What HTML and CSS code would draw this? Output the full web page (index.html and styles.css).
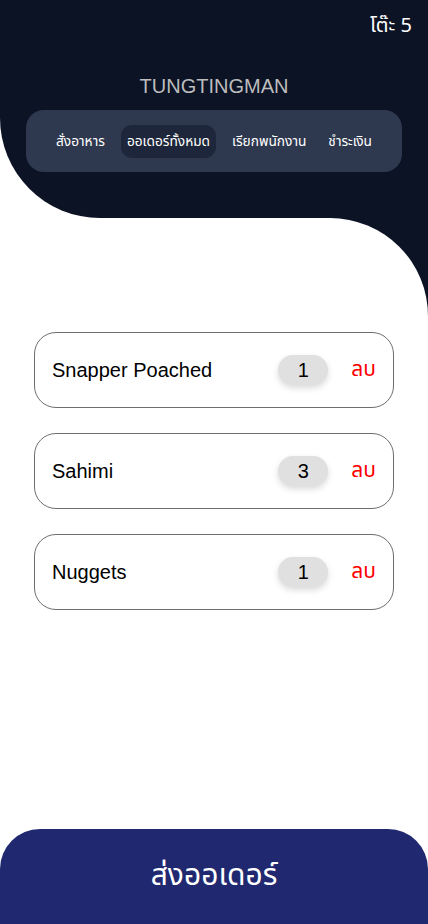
FILE: index.html
```html
<!DOCTYPE html>
<html lang="th">
<head>
<meta charset="utf-8">
<title>TUNGTINGMAN</title>
<link rel="stylesheet" href="styles.css">
</head>
<body>
<div class="app">
  <header class="top">
    <div class="table-no">โต๊ะ 5</div>
    <h1 class="brand">TUNGTINGMAN</h1>
    <nav class="tabs">
      <a class="tab">สั่งอาหาร</a>
      <a class="tab active">ออเดอร์ทั้งหมด</a>
      <a class="tab">เรียกพนักงาน</a>
      <a class="tab">ชำระเงิน</a>
    </nav>
  </header>
  <div class="wrap">
    <main class="content">
      <div class="card">
        <span class="name">Snapper Poached</span>
        <span class="qty">1</span>
        <span class="del">ลบ</span>
      </div>
      <div class="card">
        <span class="name">Sahimi</span>
        <span class="qty">3</span>
        <span class="del">ลบ</span>
      </div>
      <div class="card">
        <span class="name">Nuggets</span>
        <span class="qty">1</span>
        <span class="del">ลบ</span>
      </div>
    </main>
  </div>
  <footer class="bottom">
    <button class="send">ส่งออเดอร์</button>
  </footer>
</div>
</body>
</html>
```
FILE: styles.css
```css
* { box-sizing: border-box; }
html, body { margin: 0; padding: 0; background: #fff; }
body { font-family: "Liberation Sans", "Noto Sans Thai", Arial, sans-serif; }

.thai, .table-no, .tab, .del, .send {
  font-family: "Noto Sans Thai", "Liberation Sans", sans-serif;
}

.app {
  min-height: 924px;
  display: flex;
  flex-direction: column;
}

.top {
  height: 218px;
  background: #0b1325;
  border-bottom-left-radius: 100px;
  display: flex;
  flex-direction: column;
  padding: 12px 26px 0 26px;
}

.table-no {
  align-self: flex-end;
  margin-right: -10px;
  color: #fff;
  font-size: 20px;
  line-height: 28px;
}

.brand {
  margin: 34px 0 0 0;
  text-align: center;
  color: #bdbdbd;
  font-weight: normal;
  font-size: 20px;
  line-height: 24px;
}

.tabs {
  margin-top: 12px;
  height: 62px;
  background: #2e384f;
  border-radius: 18px;
  display: flex;
  align-items: center;
  justify-content: center;
  gap: 10px;
}

.tab {
  color: #fff;
  font-size: 13.7px;
  padding: 0 6px;
  height: 33px;
  line-height: 33px;
  border-radius: 11px;
}

.tab.active { background: #1d263a; }

.wrap {
  background: #0b1325;
  flex: 1;
  display: flex;
}

.content {
  flex: 1;
  background: #fff;
  border-top-right-radius: 98px;
  padding: 114px 34px 0 34px;
  display: flex;
  flex-direction: column;
  gap: 25px;
}

.card {
  height: 76px;
  border: 1px solid #6e6e6e;
  border-radius: 22px;
  display: flex;
  align-items: center;
  padding: 0 17px 0 17px;
}

.name {
  flex: 1;
  font-size: 20px;
  color: #000;
}

.qty {
  width: 50px;
  height: 30px;
  line-height: 30px;
  border-radius: 15px;
  background: #e0e0e0;
  text-align: center;
  font-size: 20px;
  color: #000;
  box-shadow: 0 3px 6px rgba(0,0,0,0.15);
}

.del {
  margin-left: 23px;
  color: #ff0000;
  font-size: 21px;
  line-height: 30px;
}

.bottom {
  background: #fff;
}

.send {
  display: block;
  width: 100%;
  height: 95px;
  border: none;
  margin: 0;
  background: #20286f;
  border-radius: 40px 40px 0 0;
  color: #fff;
  font-size: 30px;
  padding: 0 0 2px 0;
  line-height: 95px;
  text-align: center;
}
```
